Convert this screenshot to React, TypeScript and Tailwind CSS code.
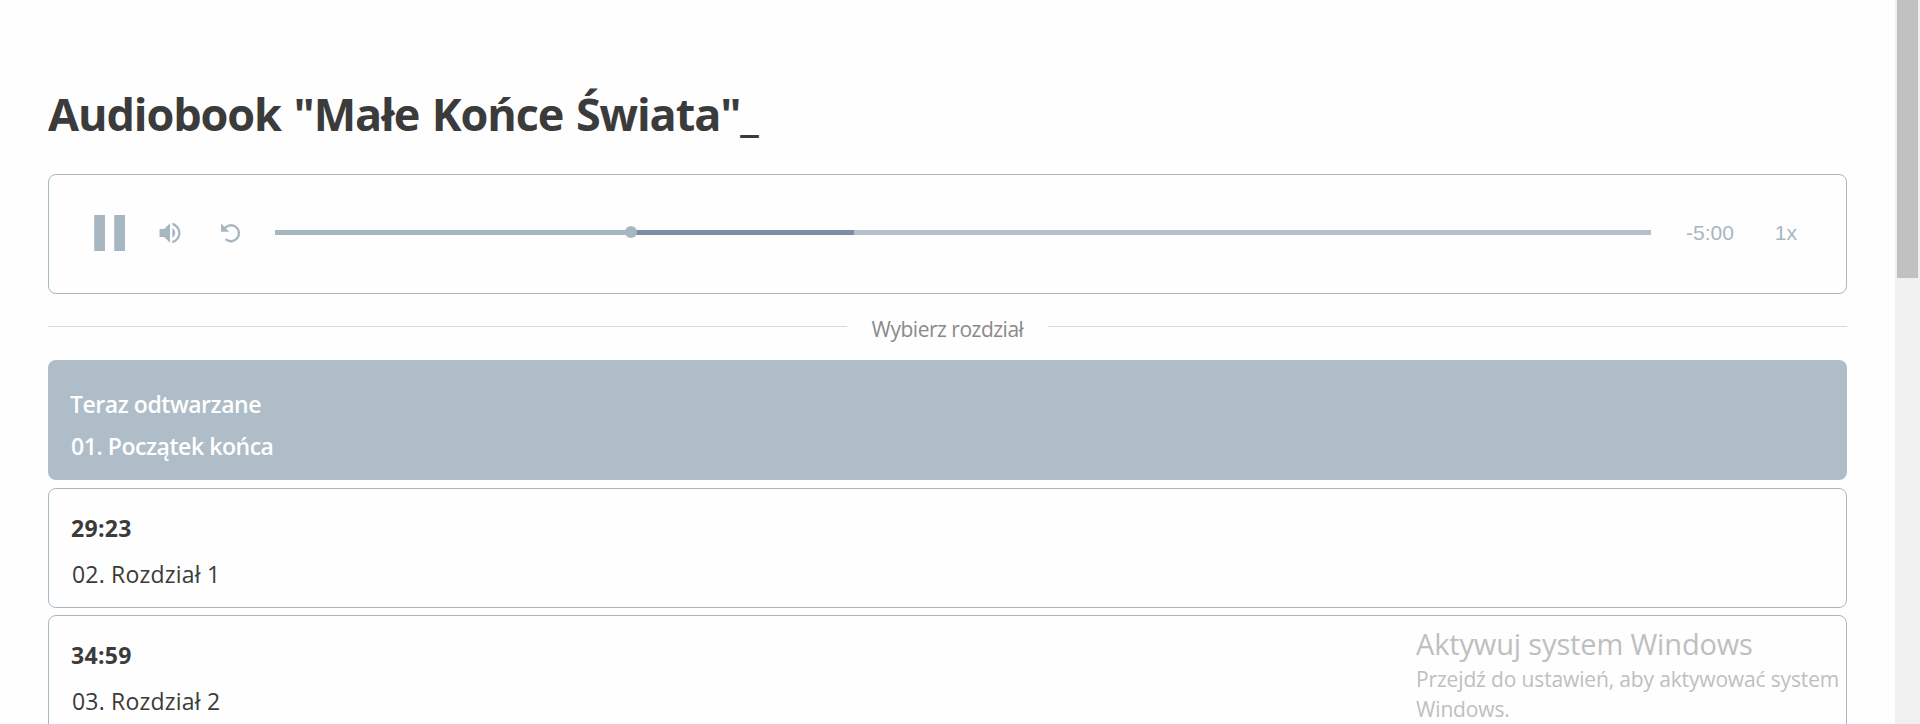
import React from "react";

interface Chapter {
  duration: string;
  title: string;
}

const chapters: Chapter[] = [
  { duration: "29:23", title: "02. Rozdział 1" },
  { duration: "34:59", title: "03. Rozdział 2" },
];

const PauseIcon: React.FC = () => (
  <svg width="32" height="36" viewBox="0 0 32 36" fill="currentColor" className="shrink-0">
    <path d="M.2 0H11v36H.2zM20.2 0H31v36H20.2z" />
  </svg>
);

const VolumeIcon: React.FC = () => (
  <svg width="28" height="28" viewBox="0 0 24 24" fill="currentColor" className="shrink-0">
    <path d="M3 8.5v7h4l5 4.8V3.7L7 8.5H3zm13.5 3.5A4.5 4.5 0 0 0 14 7.97v8.05c1.48-.73 2.5-2.25 2.5-4.02zM14 3.23v2.06c2.89.86 5 3.54 5 6.71s-2.11 5.85-5 6.71v2.06c4.01-.91 7-4.49 7-8.77s-2.99-7.86-7-8.77z" />
  </svg>
);

const ReplayIcon: React.FC = () => (
  <svg width="20" height="20" viewBox="0 0 20 20" fill="none" className="shrink-0">
    <path d="M0 .6v8.2h8.2z" fill="currentColor" />
    <path d="M3.4 5.6A8 8 0 1 1 4.6 16.2" stroke="currentColor" strokeWidth="2.4" />
  </svg>
);

const Player: React.FC = () => (
  <div className="flex h-[120px] items-center rounded-lg border border-[#a7b7c2] pb-0.5 pl-[45px] pr-[49px] text-[#a7b7c2]">
    <PauseIcon />
    <div className="ml-[30px] flex">
      <VolumeIcon />
    </div>
    <div className="ml-[37px] flex">
      <ReplayIcon />
    </div>
    <div className="relative mb-px ml-[34px] h-[5px] w-[1376px] bg-[#b5c0cd]">
      <div className="flex h-full">
        <div className="h-full w-[356px] bg-[#a7b7c2]" />
        <div className="h-full w-[223px] bg-[#7b8ca5]" />
      </div>
      <div className="absolute -top-1 left-[350px] size-3 rounded-full bg-[#a7b7c2]" />
    </div>
    <span className="ml-[35px] font-['Liberation_Sans',sans-serif] text-[21px]">-5:00</span>
    <span className="ml-auto font-['Liberation_Sans',sans-serif] text-[21px]">1x</span>
  </div>
);

const ChapterCard: React.FC<{ chapter: Chapter }> = ({ chapter }) => (
  <div className="h-[120px] rounded-lg border border-[#a7b7c2] pl-[22px] pt-[23px] text-[#3b3b3b]">
    <p className="text-[23px] font-bold leading-8 tracking-[0.3px]">{chapter.duration}</p>
    <p className="mt-[14px] pl-px text-[23px] font-medium leading-8 tracking-[0.2px]">
      {chapter.title}
    </p>
  </div>
);

const App: React.FC = () => {
  return (
    <div className="relative flex h-[724px] overflow-hidden bg-[#fefefe] font-['Open_Sans','Noto_Sans',sans-serif]">
      <main className="w-[1895px] shrink-0 pl-12 pr-12">
        <h1 className="mt-[84px] h-[90px] whitespace-nowrap text-[45px] font-bold leading-[60px] tracking-[-1.1px] text-[#3b3b3b] [word-spacing:2px]">
          Audiobook "Małe Końce Świata"_
        </h1>
        <Player />
        <div className="flex h-[66px] items-center">
          <div className="mb-0.5 h-px w-[799px] bg-[#d8d8d8]" />
          <span className="w-[201px] pt-[3px] text-center text-[21px] leading-7 tracking-[-0.5px] text-[#8a8a8a]">
            Wybierz rozdział
          </span>
          <div className="mb-0.5 h-px flex-1 bg-[#d8d8d8]" />
        </div>
        <div className="flex flex-col gap-[7px]">
          <div className="mb-px h-[120px] rounded-lg bg-[#afbdc8] pl-[22px] pt-[28px] text-[23px] font-semibold leading-8 tracking-[-0.45px] text-white">
            <p>Teraz odtwarzane</p>
            <p className="mt-[10px] pl-px">01. Początek końca</p>
          </div>
          {chapters.map((chapter) => (
            <ChapterCard key={chapter.title} chapter={chapter} />
          ))}
        </div>
      </main>
      <div className="flex-1 bg-[#f0f0f0] px-[2px]">
        <div className="h-[278px] bg-[#c1c1c1]" />
      </div>
      <div className="absolute left-[1416px] top-[624px] whitespace-nowrap text-[#bfbfbf]">
        <p className="text-[29px] leading-10 tracking-[-0.15px]">Aktywuj system Windows</p>
        <p className="text-[21px] leading-[30px] tracking-[-0.15px]">
          Przejdź do ustawień, aby aktywować system
        </p>
        <p className="text-[21px] leading-[30px] tracking-[-0.15px]">Windows.</p>
      </div>
    </div>
  );
};

export default App;
